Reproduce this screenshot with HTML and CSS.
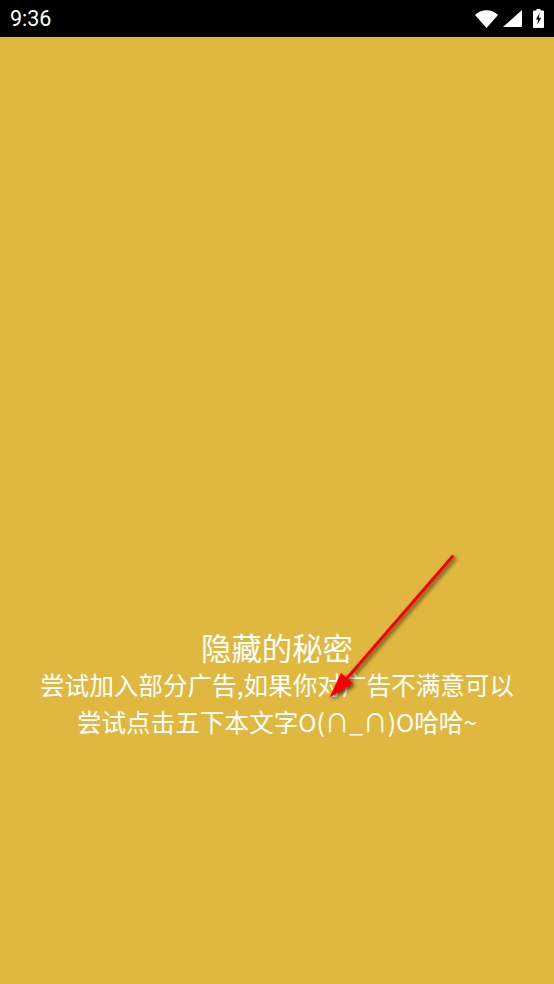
FILE: index.html
```html
<!DOCTYPE html>
<html lang="zh">
<head>
<meta charset="utf-8">
<title>隐藏的秘密</title>
<link rel="stylesheet" href="styles.css">
</head>
<body>
<div class="screen">
  <header class="status">
    <span class="time">9:36</span>
    <div class="status-icons">
      <svg class="wifi" viewBox="0 0 23 18" aria-hidden="true"><path d="M0 5C3 2 7 0.300 11.500 0.300S20 2 23 5L11.500 18z"/></svg>
      <svg class="signal" viewBox="0 0 19 17" aria-hidden="true"><path d="M0 17L19 0V17z"/></svg>
      <svg class="battery" viewBox="0 0 11 19" aria-hidden="true"><path fill-rule="evenodd" d="M3.500 0h4v1.500H10a1 1 0 0 1 1 1V18a1 1 0 0 1-1 1H1a1 1 0 0 1-1-1V2.500a1 1 0 0 1 1-1h2.500zM6.600 4L2.800 10.600h2.300L4.400 15.500 8.200 8.800H5.800z"/></svg>
    </div>
  </header>
  <main class="content">
    <h1 class="title">隐藏的秘密</h1>
    <p class="body-text">尝试加入部分广告,如果你对广告不满意可以<br>尝试点击五下本文字O(∩_∩)O哈哈~</p>
  </main>
  <svg class="arrow" viewBox="0 0 554 984" aria-hidden="true">
    <defs>
      <filter id="arrow-shadow" x="-20%" y="-20%" width="140%" height="140%">
        <feDropShadow dx="2" dy="2" stdDeviation="2" flood-color="#000" flood-opacity="0.7"/>
      </filter>
    </defs>
    <g filter="url(#arrow-shadow)">
      <line x1="452.500" y1="556.500" x2="342" y2="684" stroke="#f40000" stroke-width="3" stroke-linecap="round"/>
      <path d="M329.500 697.500L341 673L353 683.500z" fill="#f40000"/>
    </g>
  </svg>
</div>
</body>
</html>
```
FILE: styles.css
```css
* {
  box-sizing: border-box;
}

html,
body {
  margin: 0;
  padding: 0;
}

.screen {
  position: relative;
  width: 554px;
  height: 984px;
  overflow: hidden;
  display: flex;
  flex-direction: column;
  background: #e0b83f;
  font-family: "Noto Sans CJK SC", "Noto Sans", sans-serif;
}

.status {
  flex: none;
  height: 37px;
  display: flex;
  align-items: center;
  justify-content: space-between;
  padding: 0 10px;
  background: #000;
  color: #fff;
}

.time {
  font-family: Roboto, sans-serif;
  font-size: 21.500px;
  line-height: 37px;
}

.status-icons {
  display: flex;
  align-items: center;
  gap: 5px;
  fill: #fff;
}

.wifi {
  width: 23px;
  height: 18px;
}

.signal {
  width: 19px;
  height: 17px;
}

.battery {
  width: 11px;
  height: 19px;
  margin-left: 6px;
}

.content {
  flex: 1;
  padding-top: 591px;
  color: #fff;
  text-align: center;
}

.title {
  margin: 0;
  font-size: 30.400px;
  font-weight: 400;
  line-height: 38px;
}

.body-text {
  margin: 0;
  font-size: 24.600px;
  line-height: 37px;
}

.arrow {
  position: absolute;
  inset: 0;
  width: 554px;
  height: 984px;
  pointer-events: none;
}
```
